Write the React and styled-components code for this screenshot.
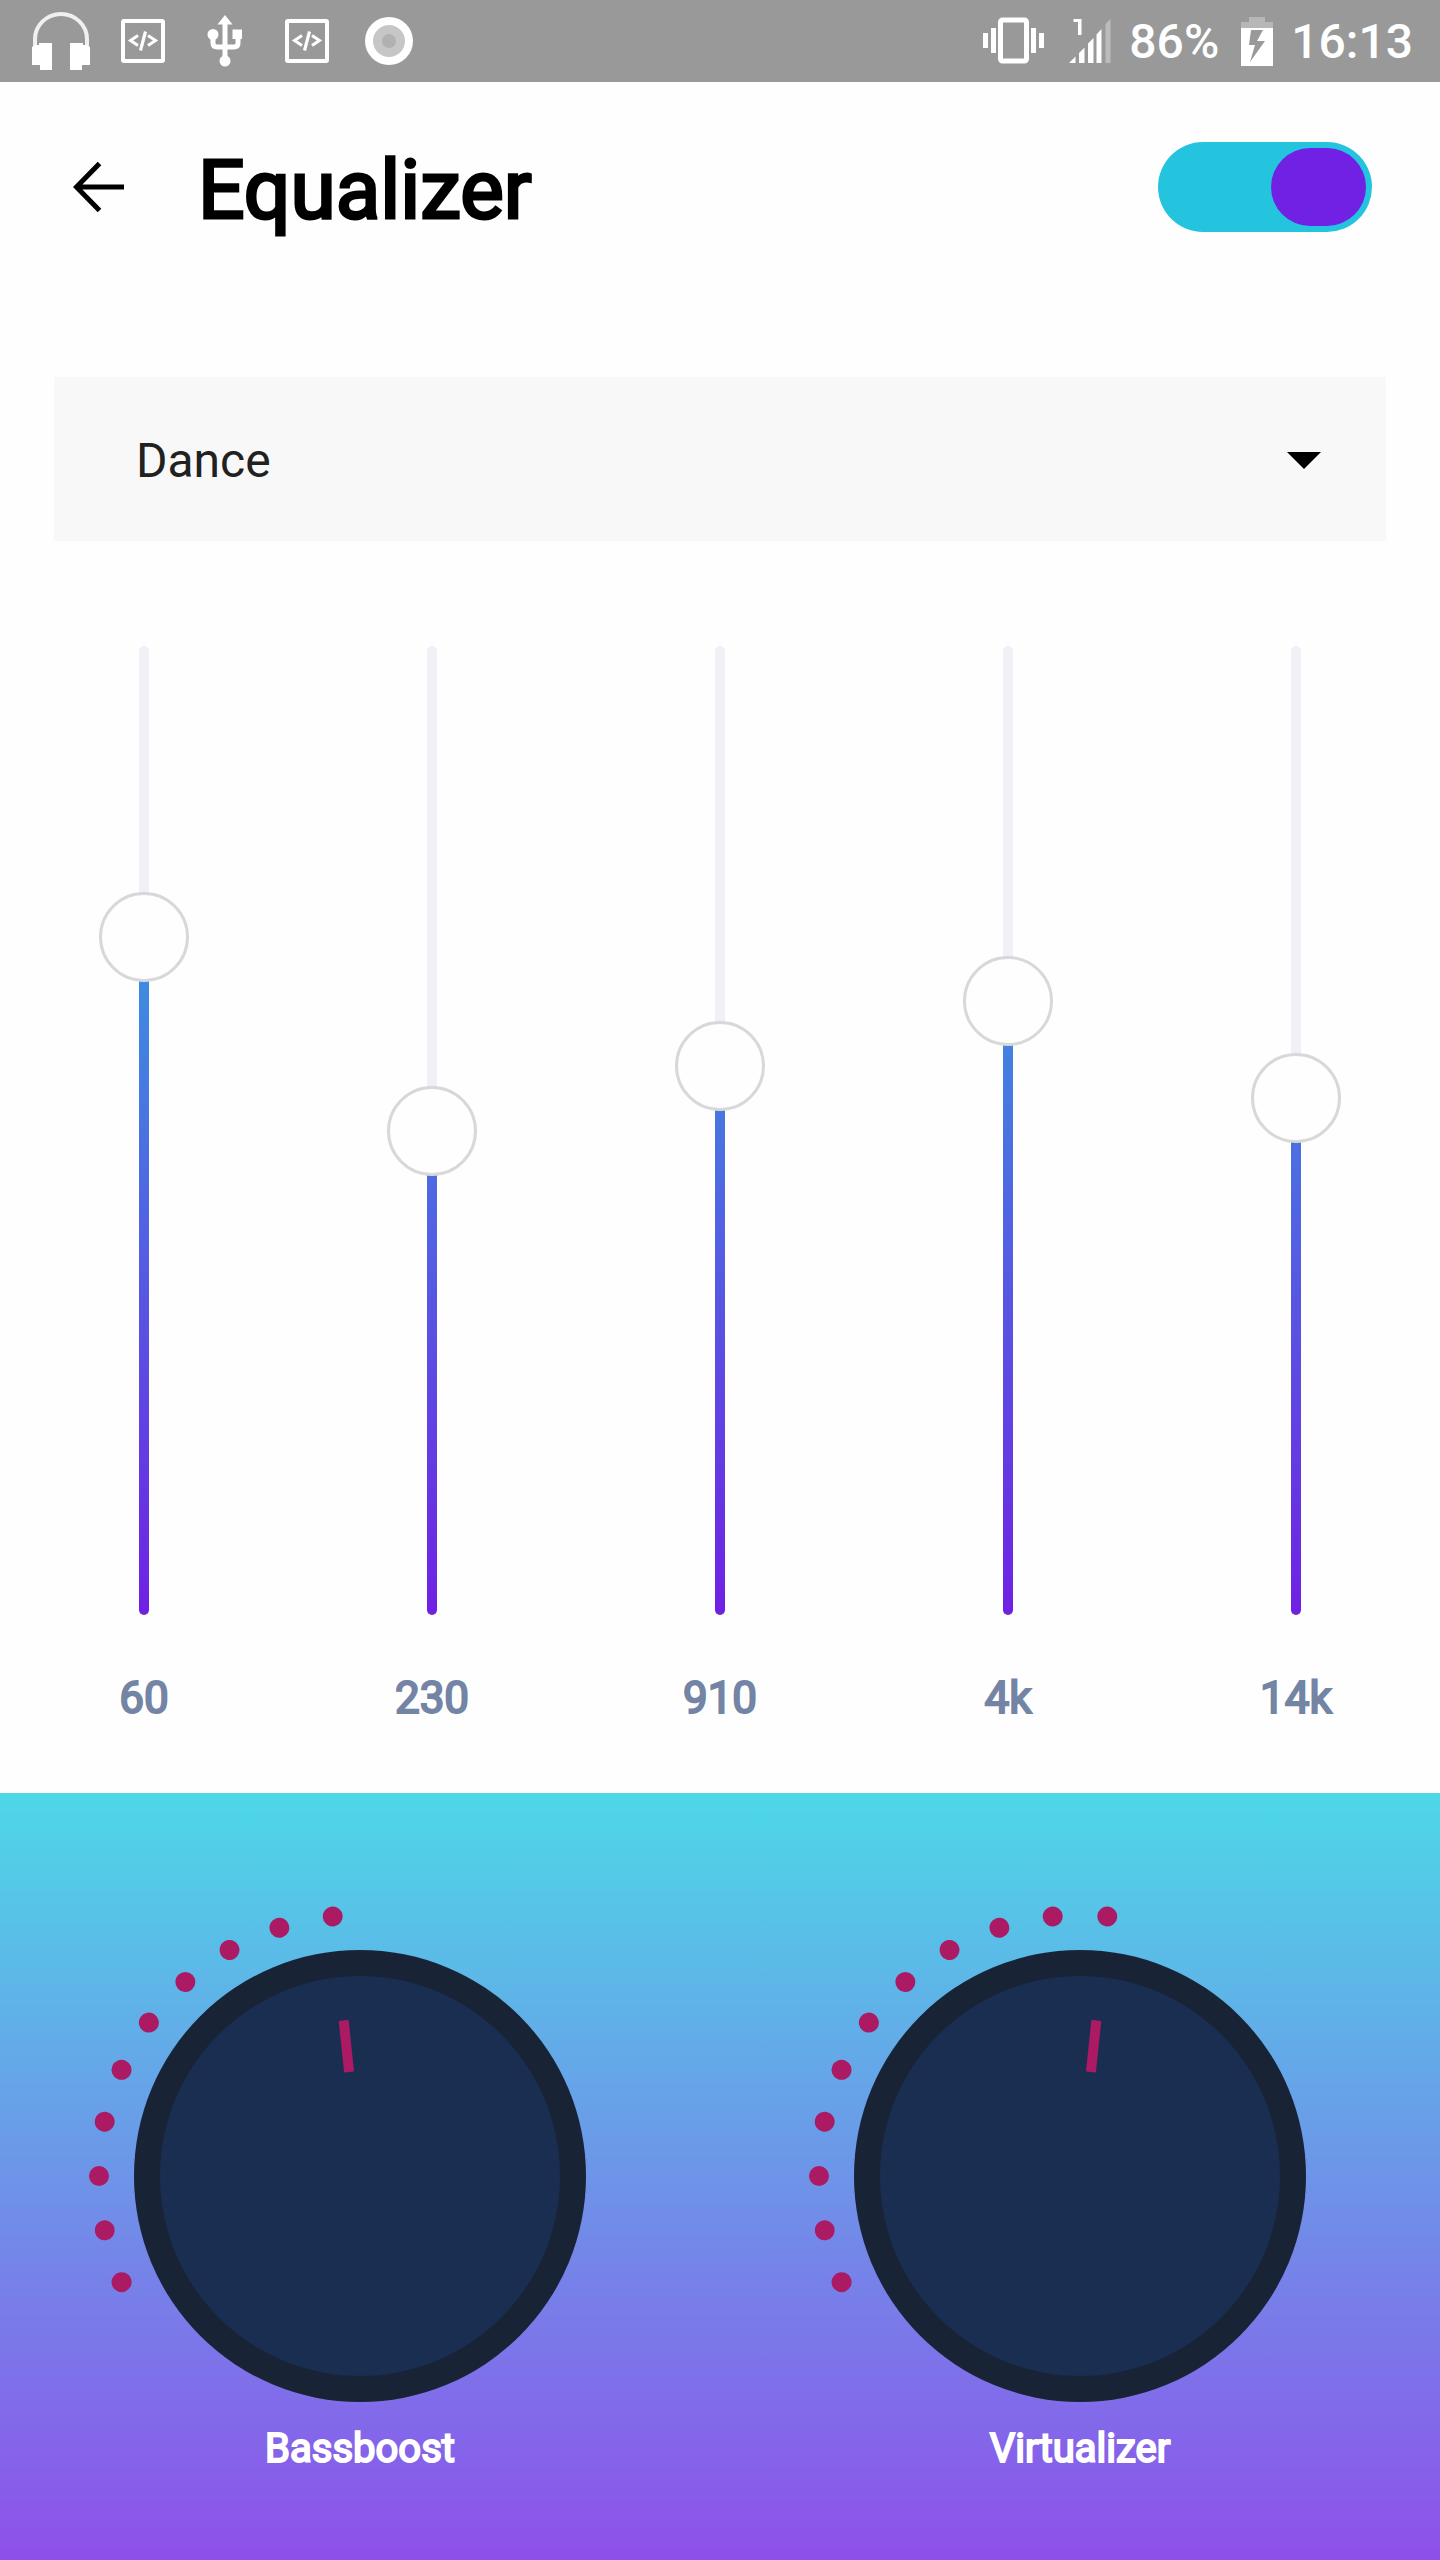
import React, { useState } from "react";
import styled, { createGlobalStyle } from "styled-components";

const CYAN = "#24c4df";
const VIOLET = "#7021e3";
const MAGENTA = "#ab1a62";

const GlobalStyle = createGlobalStyle`
  *, *::before, *::after { box-sizing: border-box; }
  body {
    margin: 0;
    background: #fefefe;
    font-family: Roboto, "Noto Sans", sans-serif;
  }
`;

const Screen = styled.div`
  display: flex;
  flex-direction: column;
  min-height: 100vh;
`;

const StatusBar = styled.div`
  display: flex;
  align-items: center;
  justify-content: space-between;
  height: 82px;
  padding: 0 27px 0 20px;
  background: #999;
  color: #fff;
`;

const Notifications = styled.div`
  display: grid;
  grid-auto-flow: column;
  grid-auto-columns: 82px;
  place-items: center;
`;

const SystemInfo = styled.div`
  display: flex;
  align-items: center;
  gap: 18px;
`;

const StatusText = styled.span`
  padding-top: 2px;
  font-size: 48px;
  line-height: 80px;
  font-weight: 500;
`;

const Header = styled.header`
  display: flex;
  align-items: center;
  height: 210px;
  padding: 0 68px 0 72px;
`;

const BackButton = styled.button`
  display: flex;
  padding: 0;
  border: 0;
  background: none;
  cursor: pointer;
`;

const Title = styled.h1`
  flex: 1;
  margin: 0 0 0 72px;
  padding-top: 6px;
  color: #000;
  font-size: 82px;
  line-height: 100px;
  font-weight: 400;
  -webkit-text-stroke: 3px #000;
`;

const Toggle = styled.input`
  appearance: none;
  display: flex;
  align-items: center;
  width: 214px;
  height: 90px;
  margin: 0;
  padding: 6px;
  border-radius: 45px;
  background: ${(p) => (p.checked ? CYAN : "#d8d8d8")};
  cursor: pointer;

  &::before {
    content: "";
    width: 95px;
    height: 78px;
    margin-left: ${(p) => (p.checked ? "auto" : "0")};
    border-radius: 39px;
    background: ${VIOLET};
  }
`;

const Preset = styled.div`
  display: grid;
  grid-template-columns: 1fr;
  align-items: center;
  margin: 85px 54px 0;

  > * { grid-area: 1 / 1; }
`;

const PresetSelect = styled.select`
  appearance: none;
  width: 100%;
  height: 164px;
  padding: 2px 82px 0;
  border: 0;
  border-radius: 0;
  background: #f8f8f8;
  color: #212121;
  font-family: inherit;
  font-size: 48px;
`;

const Caret = styled.svg`
  justify-self: end;
  margin-top: 2px;
  margin-right: 65px;
  pointer-events: none;
`;

const Bands = styled.main`
  display: grid;
  grid-template-columns: repeat(5, 1fr);
  margin-top: 60px;
  padding-bottom: 68px;
`;

const Band = styled.div`
  display: flex;
  flex-direction: column;
  align-items: center;
`;

const BandSlider = styled.div`
  display: grid;
  justify-items: center;
  width: 90px;
  height: 1059px;

  > * { grid-area: 1 / 1; }
`;

const Track = styled.div`
  width: 10px;
  margin: 45px 0;
  border-radius: 5px;
  background: #f0f0f6;
`;

const Fill = styled.div`
  align-self: end;
  width: 10px;
  margin: 45px 0;
  border-radius: 5px;
  background: linear-gradient(${CYAN}, ${VIOLET}) bottom / 10px 969px no-repeat;
`;

const BandInput = styled.input`
  appearance: none;
  writing-mode: vertical-lr;
  direction: rtl;
  width: 90px;
  height: 1059px;
  margin: 0;
  background: transparent;

  &::-webkit-slider-thumb {
    appearance: none;
    width: 90px;
    height: 90px;
    border: 3px solid #d8d8d9;
    border-radius: 50%;
    background: #fefefe;
    cursor: pointer;
  }
`;

const BandLabel = styled.label`
  margin-top: 11px;
  color: #7384a5;
  font-size: 44px;
  line-height: 54px;
  -webkit-text-stroke: 2px #7384a5;
`;

const Effects = styled.section`
  flex: 1;
  display: grid;
  grid-template-columns: repeat(2, 1fr);
  padding: 112px 0 75px;
  background: linear-gradient(#4dd8e7, #8e50ea);
`;

const Effect = styled.div`
  display: flex;
  flex-direction: column;
  align-items: center;
`;

const Dial = styled.div`
  display: grid;
  width: 542px;
  max-width: 100%;

  > * { grid-area: 1 / 1; }
`;

const DialFace = styled.svg`
  display: block;
  width: 100%;
`;

const DialInput = styled.input`
  width: 100%;
  height: 100%;
  margin: 0;
  opacity: 0;
  cursor: pointer;
`;

const EffectLabel = styled.label`
  margin-top: 22px;
  color: #fff;
  font-size: 40px;
  line-height: 50px;
  -webkit-text-stroke: 2px #fff;
`;

const HeadphonesIcon = () => (
  <svg width="58" height="58" viewBox="0 0 58 58" aria-hidden="true">
    <path d="M3 34V27a26 25 0 0 1 52 0v7" fill="none" stroke="#fff" strokeOpacity=".85" strokeWidth="4" />
    <path d="M7 31h13v27H8v-5H0V35l3-2h4zM51 31H38v27h12v-5h8V35l-3-2h-4z" fill="#fff" />
  </svg>
);

const CodeIcon = () => (
  <svg width="44" height="44" viewBox="0 0 44 44" fill="none" stroke="#fff" aria-hidden="true">
    <rect x="2" y="2" width="40" height="40" rx="1" strokeWidth="4" />
    <path d="M17 16.500l-7.500 5 7.500 5M27 16.500l7.500 5-7.500 5" strokeWidth="3" />
    <path d="M24.500 12.500l-5 19" strokeWidth="3.200" />
  </svg>
);

const UsbIcon = () => (
  <svg width="36" height="52" viewBox="0 0 36 52" aria-hidden="true">
    <path d="M18 6v40M6 19v9q0 4 4 4h17q4 0 4-4v-9" fill="none" stroke="#fff" strokeWidth="5" />
    <path d="M18 0l7.500 9.500h-15zM25.500 14.500H35v9.500h-9.500z" fill="#fff" />
    <circle cx="6" cy="19.500" r="5.500" fill="#fff" />
    <circle cx="18" cy="46" r="5.500" fill="#fff" />
  </svg>
);

const RecordIcon = () => (
  <svg width="48" height="48" viewBox="0 0 48 48" aria-hidden="true">
    <circle cx="24" cy="24" r="24" fill="#fff" />
    <circle cx="24" cy="24" r="16" fill="#c6c6c6" />
    <circle cx="24" cy="24" r="7" fill="#b1b1b1" />
  </svg>
);

const VibrateIcon = () => (
  <svg width="62" height="48" viewBox="0 0 62 48" aria-hidden="true">
    <rect x="17.500" y="3" width="26" height="41" rx="2" fill="none" stroke="#fff" strokeWidth="5" />
    <path d="M0 16h5v15H0zM8 11h5v25H8zM48 11h5v25h-5zM56 16h5v15h-5z" fill="#fff" />
  </svg>
);

const SignalIcon = () => (
  <svg width="48" height="48" viewBox="-6 -2 48 48" aria-hidden="true">
    <path d="M4.500 0h8v16H9V3H4.500zM0 44l6.500-6.500V44zM10 44V34l5.500-5.500V44zM19 44V24.500l5.500-5.500V44zM27.500 44V15.500L32.500 10v34z" fill="#fff" />
    <path d="M36.500 44V5L41.500 0v44z" fill="#fff" fillOpacity=".35" />
  </svg>
);

const BatteryIcon = () => (
  <svg width="36" height="50" viewBox="-4 0 36 50" aria-hidden="true">
    <path d="M8 1h16v5h8v6H0V6h8z" fill="#fff" fillOpacity=".3" />
    <path fillRule="evenodd" d="M0 12h32v38H0zM10 14L8 29h6L9 46l15-21h-8l6-11z" fill="#fff" />
  </svg>
);

const BackIcon = () => (
  <svg width="54" height="54" viewBox="0 0 54 54" fill="none" stroke="#000" strokeWidth="5" aria-hidden="true">
    <path d="M52 27H5M27.500 3.500L4.500 27l23 23.500" />
  </svg>
);

const MIN_GAIN = -15;
const MAX_GAIN = 15;

const DOT_STEP = 12;
const FIRST_DOT = -114;

function EqualizerBand({ id, name, initial }) {
  const [gain, setGain] = useState(initial);
  const level = (gain - MIN_GAIN) / (MAX_GAIN - MIN_GAIN);
  return (
    <Band>
      <BandSlider>
        <Track />
        <Fill style={{ height: `${Math.round(level * 969)}px` }} />
        <BandInput
          id={id}
          type="range"
          min={MIN_GAIN}
          max={MAX_GAIN}
          value={gain}
          onChange={(e) => setGain(Number(e.target.value))}
        />
      </BandSlider>
      <BandLabel htmlFor={id}>{name}</BandLabel>
    </Band>
  );
}

function EffectDial({ id, name, initial }) {
  const [value, setValue] = useState(initial);
  const dots = Array.from({ length: value }, (_, i) => FIRST_DOT + DOT_STEP * i);
  return (
    <Effect>
      <Dial>
        <DialFace viewBox="-271 -271 542 497" aria-hidden="true">
          {dots.map((angle) => (
            <circle key={angle} cy="-261" r="10" fill={MAGENTA} transform={`rotate(${angle})`} />
          ))}
          <circle r="226" fill="#182435" />
          <circle r="200" fill="#192e50" />
          <path
            d="M0-156.500v52"
            stroke={MAGENTA}
            strokeWidth="10"
            transform={`rotate(${dots[dots.length - 1]})`}
          />
        </DialFace>
        <DialInput
          id={id}
          type="range"
          min="1"
          max="20"
          value={value}
          onChange={(e) => setValue(Number(e.target.value))}
        />
      </Dial>
      <EffectLabel htmlFor={id}>{name}</EffectLabel>
    </Effect>
  );
}

export default function App() {
  const [enabled, setEnabled] = useState(true);
  return (
    <Screen>
      <GlobalStyle />
      <StatusBar>
        <Notifications>
          <HeadphonesIcon />
          <CodeIcon />
          <UsbIcon />
          <CodeIcon />
          <RecordIcon />
        </Notifications>
        <SystemInfo>
          <VibrateIcon />
          <SignalIcon />
          <StatusText>86%</StatusText>
          <BatteryIcon />
          <StatusText>16:13</StatusText>
        </SystemInfo>
      </StatusBar>
      <Header>
        <BackButton type="button" aria-label="Back">
          <BackIcon />
        </BackButton>
        <Title>Equalizer</Title>
        <Toggle
          type="checkbox"
          aria-label="Enable equalizer"
          checked={enabled}
          onChange={(e) => setEnabled(e.target.checked)}
        />
      </Header>
      <Preset>
        <PresetSelect aria-label="Preset" defaultValue="Dance">
          <option>Dance</option>
        </PresetSelect>
        <Caret width="34" height="17" viewBox="0 0 34 17" aria-hidden="true">
          <path d="M0 0h34L17 17z" />
        </Caret>
      </Preset>
      <Bands>
        <EqualizerBand id="band-60" name="60" initial={6} />
        <EqualizerBand id="band-230" name="230" initial={0} />
        <EqualizerBand id="band-910" name="910" initial={2} />
        <EqualizerBand id="band-4k" name="4k" initial={4} />
        <EqualizerBand id="band-14k" name="14k" initial={1} />
      </Bands>
      <Effects>
        <EffectDial id="bassboost" name="Bassboost" initial={10} />
        <EffectDial id="virtualizer" name="Virtualizer" initial={11} />
      </Effects>
    </Screen>
  );
}
